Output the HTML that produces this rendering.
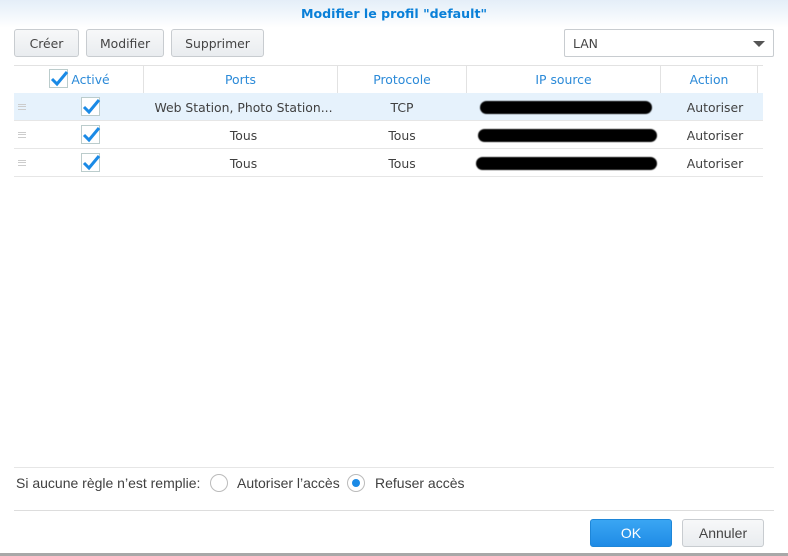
<!DOCTYPE html>
<html><head><meta charset="utf-8"><style>
*{box-sizing:border-box;margin:0;padding:0}
body{width:788px;height:556px;background:#fff;font-family:"DejaVu Sans","Liberation Sans",sans-serif;font-size:12.4px;color:#404040;position:relative;overflow:hidden}
.a{position:absolute}
.title{left:0;top:0;width:788px;height:28px;background:linear-gradient(#e4eef8,#fff);text-align:center;font-weight:bold;color:#0a80d8;font-size:12.6px;line-height:28px}
.btn{top:29px;height:28px;border:1px solid #c8ccd0;border-radius:3px;background:linear-gradient(#f7f8f9,#e9ecef);text-align:center;line-height:28px;color:#444}
.hd{top:66px;height:27px;line-height:28px;color:#2b8ad8;text-align:center}
.vl{top:66px;height:27px;width:1px;background:#e2e2e2}
.row{left:14px;width:749px;height:28px;border-bottom:1px solid #e6e6e6}
.c{position:absolute;text-align:center;line-height:29px}
.blk{position:absolute;height:13px;background:#000;border-radius:7px;filter:blur(0.6px)}
.grip{position:absolute;left:4px;top:11px;width:8px;height:6px;border-top:1px solid #ccc;border-bottom:1px solid #ccc}
.grip:after{content:"";position:absolute;left:0;top:1px;width:8px;height:1px;background:#ccc}
.lb{font-family:"Liberation Sans",sans-serif;font-size:14px}
</style></head><body>
<div class="a title">Modifier le profil "default"</div>
<div class="a btn" style="left:14px;width:65px">Créer</div>
<div class="a btn" style="left:86px;width:78px">Modifier</div>
<div class="a btn" style="left:171px;width:93px">Supprimer</div>
<div class="a" style="left:564px;top:29px;width:210px;height:28px;border:1px solid #c8ccd0;border-radius:2px;line-height:28px;padding-left:8px;color:#444">LAN
<div class="a" style="right:8px;top:11px;width:0;height:0;border-left:6px solid transparent;border-right:6px solid transparent;border-top:6px solid #555"></div></div>
<div class="a" style="left:14px;top:65px;width:749px;height:1px;background:#e2e2e2"></div>
<div class="a hd" style="left:14px;width:129px"><span style="margin-left:24px">Activé</span></div>
<svg class="a" style="left:49px;top:69px" width="20" height="20"><rect x="0.5" y="0.5" width="18" height="18" fill="#fff" stroke="#bcc"/><path d="M3 10 L8 15 L18 3" stroke="#1a8ae6" stroke-width="3" fill="none"/></svg>
<div class="a hd" style="left:144px;width:193px">Ports</div>
<div class="a hd" style="left:338px;width:128px">Protocole</div>
<div class="a hd" style="left:467px;width:193px">IP source</div>
<div class="a hd" style="left:661px;width:96px">Action</div>
<div class="a vl" style="left:143px"></div><div class="a vl" style="left:337px"></div><div class="a vl" style="left:466px"></div><div class="a vl" style="left:660px"></div><div class="a vl" style="left:757px"></div>

<div class="a row" style="top:93px;background:#e6f2fc"><div class="grip"></div>
<svg class="a" style="left:67px;top:4px" width="20" height="20"><rect x="0.5" y="0.5" width="18" height="18" fill="#fff" stroke="#bcc"/><path d="M3 10 L8 15 L18 3" stroke="#1a8ae6" stroke-width="3" fill="none"/></svg>
<div class="c" style="left:129px;width:201px">Web Station, Photo Station...</div>
<div class="c" style="left:324px;width:128px">TCP</div>
<div class="blk" style="left:466px;top:8px;width:172px"></div>
<div class="c" style="left:655px;width:92px">Autoriser</div></div>

<div class="a row" style="top:121px"><div class="grip"></div>
<svg class="a" style="left:67px;top:4px" width="20" height="20"><rect x="0.5" y="0.5" width="18" height="18" fill="#fff" stroke="#bcc"/><path d="M3 10 L8 15 L18 3" stroke="#1a8ae6" stroke-width="3" fill="none"/></svg>
<div class="c" style="left:129px;width:201px">Tous</div>
<div class="c" style="left:324px;width:128px">Tous</div>
<div class="blk" style="left:464px;top:8px;width:179px"></div>
<div class="c" style="left:655px;width:92px">Autoriser</div></div>

<div class="a row" style="top:149px"><div class="grip"></div>
<svg class="a" style="left:67px;top:4px" width="20" height="20"><rect x="0.5" y="0.5" width="18" height="18" fill="#fff" stroke="#bcc"/><path d="M3 10 L8 15 L18 3" stroke="#1a8ae6" stroke-width="3" fill="none"/></svg>
<div class="c" style="left:129px;width:201px">Tous</div>
<div class="c" style="left:324px;width:128px">Tous</div>
<div class="blk" style="left:462px;top:8px;width:181px"></div>
<div class="c" style="left:655px;width:92px">Autoriser</div></div>

<div class="a" style="left:14px;top:467px;width:760px;height:1px;background:#e6e6e6"></div>
<div class="a lb" style="left:16px;top:475px;line-height:17px">Si aucune règle n’est remplie:</div>
<div class="a" style="left:210px;top:474px;width:18px;height:18px;border:1px solid #bbb;border-radius:50%"></div>
<div class="a lb" style="left:237px;top:475px;line-height:17px">Autoriser l’accès</div>
<div class="a" style="left:347px;top:474px;width:18px;height:18px;border:1px solid #bbb;border-radius:50%"><div class="a" style="left:4px;top:4px;width:8px;height:8px;border-radius:50%;background:#1a8ae6"></div></div>
<div class="a lb" style="left:375px;top:475px;line-height:17px">Refuser accès</div>
<div class="a" style="left:14px;top:510px;width:760px;height:1px;background:#ddd"></div>
<div class="a lb" style="left:590px;top:519px;width:82px;height:28px;border:1px solid #1e86d8;border-radius:3px;background:linear-gradient(#3aa6f3,#1f8be6);color:#fff;text-align:center;line-height:26px">OK</div>
<div class="a btn lb" style="left:682px;top:519px;width:82px;line-height:26px">Annuler</div>
<div class="a" style="left:0;top:553px;width:788px;height:3px;background:#a8a8a8"></div>
</body></html>
